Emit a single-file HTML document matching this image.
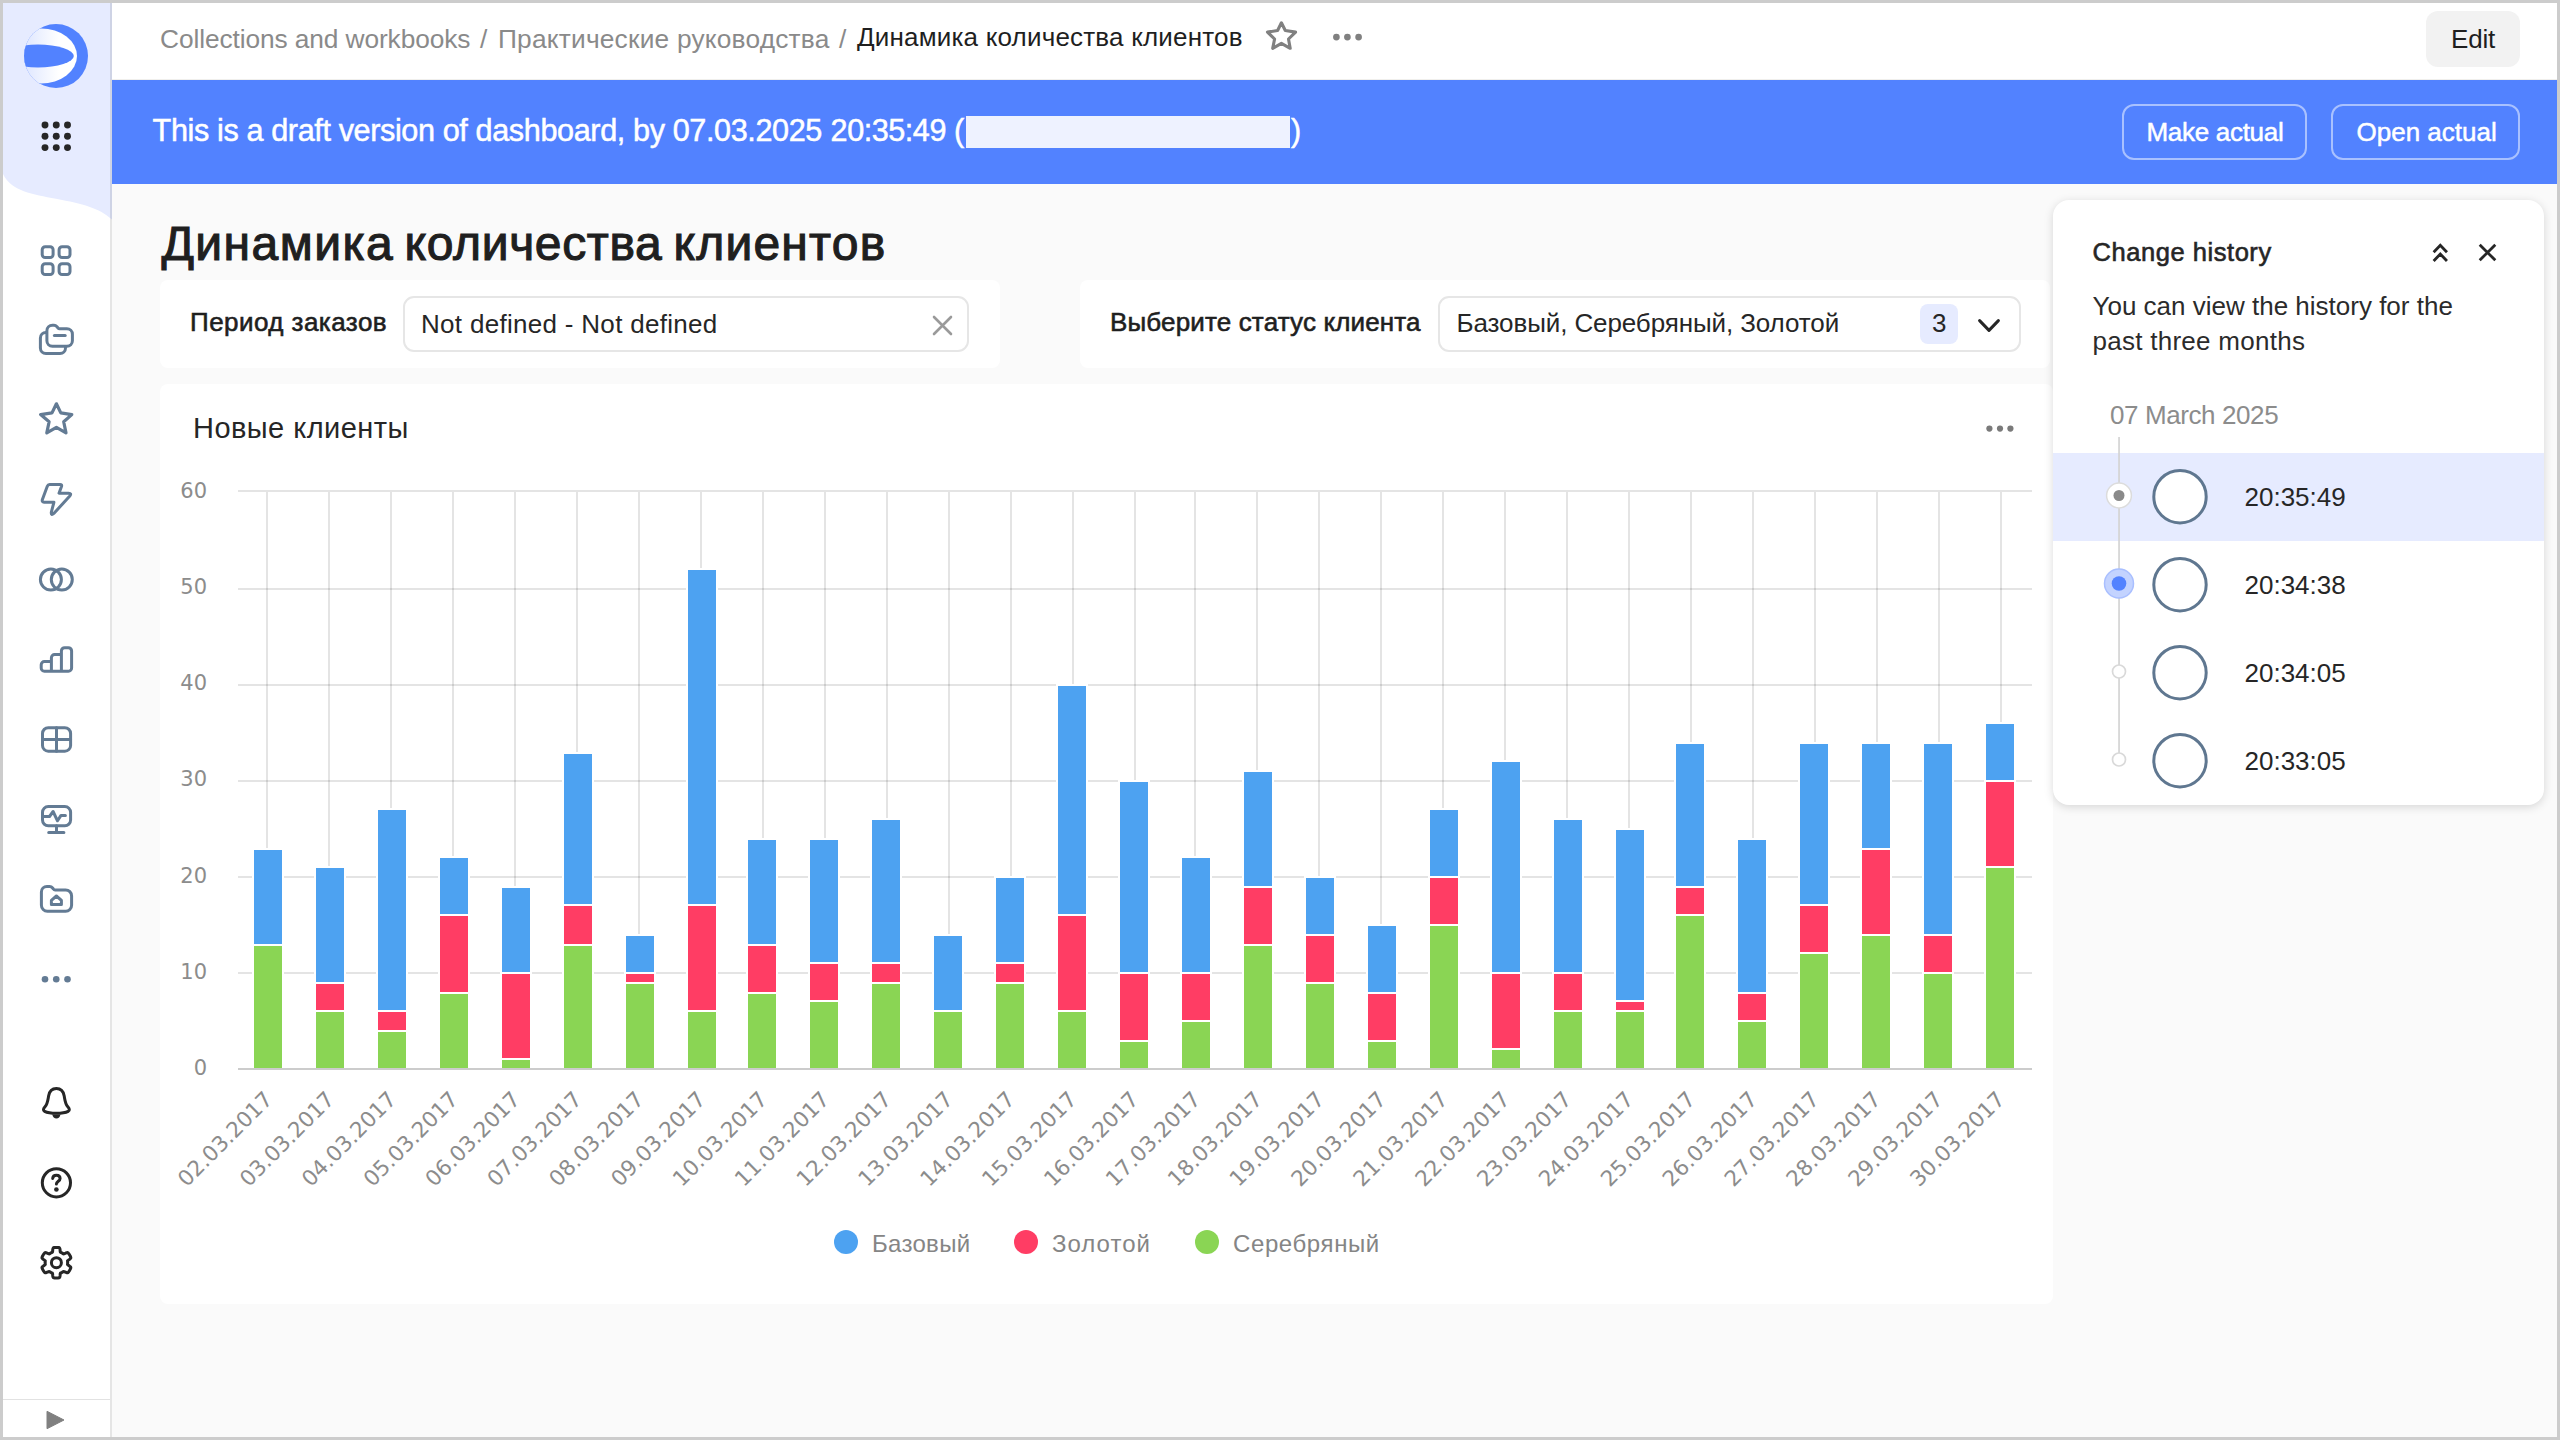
<!DOCTYPE html>
<html lang="ru"><head><meta charset="utf-8"><title>Динамика количества клиентов</title>
<style>
*{box-sizing:border-box;margin:0;padding:0}
html,body{width:2560px;height:1440px;overflow:hidden;background:#fafafa;font-family:"Liberation Sans", sans-serif;}
.abs{position:absolute}
.t{position:absolute;white-space:pre;line-height:1}
.yl{font-family:"DejaVu Sans", "Liberation Sans", sans-serif;font-size:21px;fill:#8c8c8c}
.xl{font-family:"DejaVu Sans", "Liberation Sans", sans-serif;font-size:21.5px;fill:#8c8c8c}
.lg{font-family:"Liberation Sans", sans-serif;font-size:24px;fill:#858585}
#frame{position:absolute;left:0;top:0;width:2560px;height:1440px;border:3px solid #cccccc;pointer-events:none;z-index:50}
#side{position:absolute;left:3px;top:3px;width:109px;height:1434px;background:#fff}
#head{position:absolute;left:112px;top:3px;width:2445px;height:77px;background:#fff}
#banner{position:absolute;left:112px;top:80px;width:2445px;height:104px;background:#5282ff}
.card{position:absolute;background:#fff;border-radius:8px}
.inp{position:absolute;border:2px solid #e6e6e6;border-radius:11px;background:#fff}
.btn{position:absolute;border-radius:12px}
#panel{position:absolute;left:2053px;top:200px;width:491px;height:605px;background:#fff;border-radius:16px;box-shadow:0 2px 10px rgba(0,0,0,0.15);overflow:hidden}
</style></head>
<body>
<div id="side"></div>
<svg class="abs" style="left:3px;top:3px" width="109" height="230" viewBox="0 0 109 230"><path d="M0 0 H109 V216.5 C 96 205, 80 201, 53 195.8 C 30 191.5, 8 188, 0 171 Z" fill="#e6ebff"/></svg>
<svg class="abs" style="left:23px;top:23px" width="66" height="66" viewBox="0 0 66 66">
<defs><linearGradient id="lg1" gradientUnits="userSpaceOnUse" x1="2" y1="0" x2="36" y2="0"><stop offset="0" stop-color="#dfe7ff"/><stop offset="1" stop-color="#ffffff"/></linearGradient>
<clipPath id="cp"><circle cx="33" cy="33" r="32"/></clipPath></defs>
<circle cx="33" cy="33" r="32" fill="#5282ff"/>
<g clip-path="url(#cp)">
<ellipse cx="18" cy="33" rx="36" ry="27.5" fill="url(#lg1)"/>
<ellipse cx="15" cy="33" rx="35.8" ry="11.4" fill="#5282ff"/>
</g></svg>
<svg class="abs" style="left:0;top:0" width="112" height="200" fill="#262626"><circle cx="45" cy="125" r="3.45"/><circle cx="56.25" cy="125" r="3.45"/><circle cx="67.5" cy="125" r="3.45"/><circle cx="45" cy="136.3" r="3.45"/><circle cx="56.25" cy="136.3" r="3.45"/><circle cx="67.5" cy="136.3" r="3.45"/><circle cx="45" cy="147.6" r="3.45"/><circle cx="56.25" cy="147.6" r="3.45"/><circle cx="67.5" cy="147.6" r="3.45"/></svg>
<svg class="abs" style="left:34px;top:239px" width="44" height="44" viewBox="34 239 44 44" fill="none" stroke="#637b94" stroke-width="3.0" stroke-linecap="round" stroke-linejoin="round"><rect x="42.2" y="246.7" width="10.9" height="10.9" rx="3"/><rect x="59.1" y="246.7" width="10.9" height="10.9" rx="3"/><rect x="42.2" y="263.7" width="10.9" height="10.9" rx="3"/><rect x="59.1" y="263.7" width="10.9" height="10.9" rx="3"/></svg>
<svg class="abs" style="left:34px;top:318px" width="44" height="44" viewBox="34 318 44 44" fill="none" stroke="#637b94" stroke-width="3.0" stroke-linecap="round" stroke-linejoin="round"><path d="M46.9 340.7 V330.8 A5.5 5.5 0 0 1 52.4 325.3 H54 C55.5 325.3 56.3 326 57 326.8 L58 328 C58.4 328.5 58.9 328.8 59.6 328.8 H66.9 A5.5 5.5 0 0 1 72.4 334.3 V340.7 A5.5 5.5 0 0 1 66.9 346.2 H52.4 A5.5 5.5 0 0 1 46.9 340.7 Z"/><path d="M46.5 332.5 H45.9 A5.5 5.5 0 0 0 40.4 338 V348 A5.5 5.5 0 0 0 45.9 353.5 H60 A5.5 5.5 0 0 0 65.5 348 V347"/><path d="M54.4 335.6 H65.2"/></svg>
<svg class="abs" style="left:34px;top:397px" width="44" height="44" viewBox="34 397 44 44" fill="none" stroke="#637b94" stroke-width="3.2" stroke-linecap="round" stroke-linejoin="round"><path d="M56.4 403.8 L60.8 412.9 L71.8 414.6 L63.7 421.7 L66 432.9 L56.4 427.3 L46.8 432.9 L49.1 421.7 L40.6 414.6 L52 412.9 Z"/></svg>
<svg class="abs" style="left:34px;top:477px" width="44" height="44" viewBox="34 477 44 44" fill="none" stroke="#637b94" stroke-width="3.0" stroke-linecap="round" stroke-linejoin="round"><path d="M49.6 484.4 H60 Q62.2 484.4 61.5 486.5 L59 493.2 H68.5 Q72 493.4 69.8 496 L53.8 513.5 Q51 516 51.3 512.3 L53.9 502.3 H44.2 Q41.6 502 42.4 499.5 L47.3 486.2 Q48 484.4 49.6 484.4 Z"/></svg>
<svg class="abs" style="left:34px;top:558px" width="44" height="44" viewBox="34 558 44 44" fill="none" stroke="#637b94" stroke-width="3.0" stroke-linecap="round" stroke-linejoin="round"><circle cx="50.9" cy="579.6" r="10.5"/><circle cx="61.8" cy="579.6" r="10.5"/></svg>
<svg class="abs" style="left:34px;top:638px" width="44" height="44" viewBox="34 638 44 44" fill="none" stroke="#637b94" stroke-width="3.0" stroke-linecap="round" stroke-linejoin="round"><path d="M41.2 668 V664.7 A3.2 3.2 0 0 1 44.4 661.5 H51.4 V657.8 A3.2 3.2 0 0 1 54.6 654.6 H61.4 V650.9 A3.2 3.2 0 0 1 64.6 647.7 H68.4 A3.2 3.2 0 0 1 71.6 650.9 V668 A3.2 3.2 0 0 1 68.4 671.25 H44.4 A3.2 3.2 0 0 1 41.2 668 Z M51.4 661.5 V671.25 M61.4 654.6 V671.25"/></svg>
<svg class="abs" style="left:34px;top:718px" width="44" height="44" viewBox="34 718 44 44" fill="none" stroke="#637b94" stroke-width="3.0" stroke-linecap="round" stroke-linejoin="round"><rect x="42.5" y="727.7" width="28.1" height="23.55" rx="5.8"/><path d="M56.5 727.7 V751.25 M42.5 739.5 H70.6"/></svg>
<svg class="abs" style="left:34px;top:798px" width="44" height="44" viewBox="34 798 44 44" fill="none" stroke="#637b94" stroke-width="3.0" stroke-linecap="round" stroke-linejoin="round"><rect x="42.5" y="806.5" width="28.1" height="19.3" rx="5.8"/><path d="M56.5 825.8 V832.5 M48.7 832.5 H63.9"/><path d="M42.5 816.5 H49.5 L53.1 811.5 L57.5 820.8 L61 815.4 H65.4"/></svg>
<svg class="abs" style="left:34px;top:878px" width="44" height="44" viewBox="34 878 44 44" fill="none" stroke="#637b94" stroke-width="3.0" stroke-linecap="round" stroke-linejoin="round"><path d="M41.4 892 A5.5 5.5 0 0 1 46.9 886.5 H49.6 C51 886.5 51.9 887.1 52.6 888 L53.4 889 C53.8 889.6 54.3 889.9 55.1 889.9 H65.6 A6 6 0 0 1 71.6 895.9 V905.25 A6 6 0 0 1 65.6 911.25 H47.4 A6 6 0 0 1 41.4 905.25 Z"/><path d="M56.4 896 L51.4 900.4 V904.6 H61.4 V900.4 Z"/></svg>
<svg class="abs" style="left:36px;top:969px" width="40" height="20" viewBox="36 969 40 20" fill="#637b94"><circle cx="45" cy="979.2" r="3.3"/><circle cx="56.25" cy="979.2" r="3.3"/><circle cx="67.5" cy="979.2" r="3.3"/></svg>
<svg class="abs" style="left:34px;top:1081px" width="44" height="44" viewBox="34 1081 44 44" fill="none" stroke="#262626" stroke-width="3.0" stroke-linecap="round" stroke-linejoin="round"><path d="M56.4 1088.6 C51.5 1088.6 49.3 1092 48.6 1096 C47.9 1100 47.5 1104 45 1106.8 C43.3 1108.7 42.8 1110.4 44.6 1111.3 C47 1112.5 52 1113.2 56.4 1113.2 C60.8 1113.2 65.8 1112.5 68.2 1111.3 C70 1110.4 69.5 1108.7 67.8 1106.8 C65.3 1104 64.9 1100 64.2 1096 C63.5 1092 61.3 1088.6 56.4 1088.6 Z"/><path d="M52.3 1114.6 H60.5 C60 1117 58.5 1118.6 56.4 1118.6 C54.3 1118.6 52.8 1117 52.3 1114.6 Z" fill="#262626" stroke="none"/></svg>
<svg class="abs" style="left:34px;top:1161px" width="44" height="44" viewBox="34 1161 44 44" fill="none" stroke="#262626" stroke-width="3.0" stroke-linecap="round" stroke-linejoin="round"><circle cx="56.4" cy="1182.8" r="14.1"/><path d="M52.7 1178.4 C52.9 1176.4 54.3 1175.3 56.4 1175.3 C58.6 1175.3 60.1 1176.6 60.1 1178.5 C60.1 1181.2 56.4 1181.4 56.4 1184.1"/><circle cx="56.4" cy="1189.5" r="2.3" fill="#262626" stroke="none"/></svg>
<svg class="abs" style="left:34px;top:1241px" width="44" height="44" viewBox="34 1241 44 44" fill="none" stroke="#262626" stroke-width="3.0" stroke-linecap="round" stroke-linejoin="round"><path d="M56.4 1247.4 L56.7 1247.4 L56.9 1247.4 L57.2 1247.4 L57.5 1247.4 L57.7 1247.5 L58.0 1247.5 L58.3 1247.5 L58.5 1247.5 L58.8 1247.6 L59.1 1247.6 L59.3 1247.7 L59.5 1247.9 L59.7 1248.3 L59.9 1248.8 L60.0 1249.3 L60.1 1249.9 L60.1 1250.6 L60.2 1251.1 L60.2 1251.6 L60.3 1252.0 L60.4 1252.2 L60.6 1252.3 L60.8 1252.3 L61.0 1252.4 L61.2 1252.5 L61.3 1252.6 L61.5 1252.7 L61.7 1252.8 L61.9 1252.9 L62.0 1253.0 L62.2 1253.1 L62.4 1253.2 L62.5 1253.3 L62.7 1253.4 L62.9 1253.5 L63.0 1253.6 L63.2 1253.7 L63.3 1253.8 L63.5 1253.9 L63.7 1253.9 L64.1 1253.8 L64.6 1253.6 L65.1 1253.4 L65.6 1253.2 L66.2 1252.9 L66.7 1252.7 L67.2 1252.6 L67.6 1252.6 L67.9 1252.7 L68.1 1252.9 L68.3 1253.1 L68.5 1253.3 L68.6 1253.5 L68.8 1253.7 L68.9 1253.9 L69.1 1254.1 L69.2 1254.4 L69.4 1254.6 L69.5 1254.8 L69.7 1255.0 L69.8 1255.3 L69.9 1255.5 L70.0 1255.8 L70.2 1256.0 L70.3 1256.2 L70.4 1256.5 L70.5 1256.7 L70.6 1257.0 L70.7 1257.2 L70.8 1257.5 L70.8 1257.7 L70.8 1258.0 L70.6 1258.4 L70.2 1258.7 L69.8 1259.1 L69.3 1259.5 L68.8 1259.8 L68.3 1260.2 L67.9 1260.5 L67.7 1260.7 L67.5 1260.9 L67.5 1261.1 L67.6 1261.3 L67.6 1261.5 L67.6 1261.7 L67.6 1261.9 L67.6 1262.1 L67.6 1262.3 L67.6 1262.5 L67.7 1262.7 L67.6 1262.9 L67.6 1263.1 L67.6 1263.3 L67.6 1263.5 L67.6 1263.7 L67.6 1263.9 L67.6 1264.1 L67.5 1264.3 L67.5 1264.5 L67.7 1264.7 L67.9 1264.9 L68.3 1265.2 L68.8 1265.6 L69.3 1265.9 L69.8 1266.3 L70.2 1266.7 L70.6 1267.0 L70.8 1267.4 L70.8 1267.7 L70.8 1267.9 L70.7 1268.2 L70.6 1268.4 L70.5 1268.7 L70.4 1268.9 L70.3 1269.2 L70.2 1269.4 L70.0 1269.6 L69.9 1269.9 L69.8 1270.1 L69.7 1270.4 L69.5 1270.6 L69.4 1270.8 L69.2 1271.0 L69.1 1271.3 L68.9 1271.5 L68.8 1271.7 L68.6 1271.9 L68.5 1272.1 L68.3 1272.3 L68.1 1272.5 L67.9 1272.7 L67.6 1272.8 L67.2 1272.8 L66.7 1272.7 L66.2 1272.5 L65.6 1272.2 L65.1 1272.0 L64.6 1271.8 L64.1 1271.6 L63.7 1271.5 L63.5 1271.5 L63.3 1271.6 L63.2 1271.7 L63.0 1271.8 L62.9 1271.9 L62.7 1272.0 L62.5 1272.1 L62.4 1272.2 L62.2 1272.3 L62.0 1272.4 L61.9 1272.5 L61.7 1272.6 L61.5 1272.7 L61.3 1272.8 L61.2 1272.9 L61.0 1273.0 L60.8 1273.1 L60.6 1273.1 L60.4 1273.2 L60.3 1273.4 L60.2 1273.8 L60.2 1274.3 L60.1 1274.8 L60.1 1275.5 L60.0 1276.1 L59.9 1276.6 L59.7 1277.1 L59.5 1277.5 L59.3 1277.7 L59.1 1277.8 L58.8 1277.8 L58.5 1277.9 L58.3 1277.9 L58.0 1277.9 L57.7 1277.9 L57.5 1278.0 L57.2 1278.0 L56.9 1278.0 L56.7 1278.0 L56.4 1278.0 L56.1 1278.0 L55.9 1278.0 L55.6 1278.0 L55.3 1278.0 L55.1 1277.9 L54.8 1277.9 L54.5 1277.9 L54.3 1277.9 L54.0 1277.8 L53.7 1277.8 L53.5 1277.7 L53.3 1277.5 L53.1 1277.1 L52.9 1276.6 L52.8 1276.1 L52.7 1275.5 L52.7 1274.8 L52.6 1274.3 L52.6 1273.8 L52.5 1273.4 L52.4 1273.2 L52.2 1273.1 L52.0 1273.1 L51.8 1273.0 L51.6 1272.9 L51.5 1272.8 L51.3 1272.7 L51.1 1272.6 L50.9 1272.5 L50.8 1272.4 L50.6 1272.3 L50.4 1272.2 L50.3 1272.1 L50.1 1272.0 L49.9 1271.9 L49.8 1271.8 L49.6 1271.7 L49.5 1271.6 L49.3 1271.5 L49.1 1271.5 L48.7 1271.6 L48.2 1271.8 L47.7 1272.0 L47.2 1272.2 L46.6 1272.5 L46.1 1272.7 L45.6 1272.8 L45.2 1272.8 L44.9 1272.7 L44.7 1272.5 L44.5 1272.3 L44.3 1272.1 L44.2 1271.9 L44.0 1271.7 L43.9 1271.5 L43.7 1271.3 L43.6 1271.0 L43.4 1270.8 L43.3 1270.6 L43.1 1270.4 L43.0 1270.1 L42.9 1269.9 L42.8 1269.6 L42.6 1269.4 L42.5 1269.2 L42.4 1268.9 L42.3 1268.7 L42.2 1268.4 L42.1 1268.2 L42.0 1267.9 L42.0 1267.7 L42.0 1267.4 L42.2 1267.0 L42.6 1266.7 L43.0 1266.3 L43.5 1265.9 L44.0 1265.6 L44.5 1265.2 L44.9 1264.9 L45.1 1264.7 L45.3 1264.5 L45.3 1264.3 L45.2 1264.1 L45.2 1263.9 L45.2 1263.7 L45.2 1263.5 L45.2 1263.3 L45.2 1263.1 L45.2 1262.9 L45.1 1262.7 L45.2 1262.5 L45.2 1262.3 L45.2 1262.1 L45.2 1261.9 L45.2 1261.7 L45.2 1261.5 L45.2 1261.3 L45.3 1261.1 L45.3 1260.9 L45.1 1260.7 L44.9 1260.5 L44.5 1260.2 L44.0 1259.8 L43.5 1259.5 L43.0 1259.1 L42.6 1258.7 L42.2 1258.4 L42.0 1258.0 L42.0 1257.7 L42.0 1257.5 L42.1 1257.2 L42.2 1257.0 L42.3 1256.7 L42.4 1256.5 L42.5 1256.2 L42.6 1256.0 L42.8 1255.8 L42.9 1255.5 L43.0 1255.3 L43.1 1255.0 L43.3 1254.8 L43.4 1254.6 L43.6 1254.4 L43.7 1254.1 L43.9 1253.9 L44.0 1253.7 L44.2 1253.5 L44.3 1253.3 L44.5 1253.1 L44.7 1252.9 L44.9 1252.7 L45.2 1252.6 L45.6 1252.6 L46.1 1252.7 L46.6 1252.9 L47.2 1253.2 L47.7 1253.4 L48.2 1253.6 L48.7 1253.8 L49.1 1253.9 L49.3 1253.9 L49.5 1253.8 L49.6 1253.7 L49.8 1253.6 L49.9 1253.5 L50.1 1253.4 L50.3 1253.3 L50.4 1253.2 L50.6 1253.1 L50.8 1253.0 L50.9 1252.9 L51.1 1252.8 L51.3 1252.7 L51.5 1252.6 L51.6 1252.5 L51.8 1252.4 L52.0 1252.3 L52.2 1252.3 L52.4 1252.2 L52.5 1252.0 L52.6 1251.6 L52.6 1251.1 L52.7 1250.6 L52.7 1249.9 L52.8 1249.3 L52.9 1248.8 L53.1 1248.3 L53.3 1247.9 L53.5 1247.7 L53.7 1247.6 L54.0 1247.6 L54.3 1247.5 L54.5 1247.5 L54.8 1247.5 L55.1 1247.5 L55.3 1247.4 L55.6 1247.4 L55.9 1247.4 L56.1 1247.4 Z"/><circle cx="56.4" cy="1262.7" r="5"/></svg>
<div class="abs" style="left:110.4px;top:3px;width:1.6px;height:1434px;background:rgba(0,0,0,0.1)"></div>
<div class="abs" style="left:3px;top:1398.5px;width:107px;height:1.5px;background:#e2e2e2"></div>
<svg class="abs" style="left:46px;top:1409.5px" width="20" height="20" viewBox="0 0 20 20"><path d="M1 1.3 L18 10 L1 18.7 Z" fill="#808080" stroke="#808080" stroke-width="1" stroke-linejoin="round"/></svg>
<div id="head"></div>
<div class="abs" style="left:112px;top:78.6px;width:2445px;height:1.4px;background:#f0efec"></div>
<div class="t" style="left:160px;top:26.14px;font-size:26.3px;color:#8a8a8a;letter-spacing:-0.1px;">Collections and workbooks</div>
<div class="t" style="left:480px;top:26.14px;font-size:26.3px;color:#8a8a8a;">/</div>
<div class="t" style="left:498px;top:26.14px;font-size:26.3px;color:#8a8a8a;letter-spacing:0.2px;">Практические руководства</div>
<div class="t" style="left:839px;top:26.14px;font-size:26.3px;color:#8a8a8a;">/</div>
<div class="t" style="left:857px;top:24.49px;font-size:26px;color:#1f1f1f;letter-spacing:0.19px;">Динамика количества клиентов</div>
<svg class="abs" style="left:1260px;top:14px" width="44" height="44" viewBox="1260 14 44 44" fill="none" stroke="#808080" stroke-width="3.1" stroke-linejoin="round"><path d="M1281.4 22.8 L1285.3 30.5 L1295.6 32.1 L1288.5 39 L1290.2 48.3 L1281.4 43.4 L1272.7 48.3 L1274.6 39 L1267.5 32.1 L1277.6 30.5 Z"/></svg>
<svg class="abs" style="left:1328px;top:29px" width="40" height="16" viewBox="1328 29 40 16" fill="#808080"><circle cx="1336.4" cy="37.1" r="3.35"/><circle cx="1347.4" cy="37.1" r="3.35"/><circle cx="1358.6" cy="37.1" r="3.35"/></svg>
<div class="btn" style="left:2426px;top:11px;width:94px;height:56px;background:#f2f2f2"></div>
<div class="t" style="left:2451px;top:25.99px;font-size:26px;color:#1f1f1f;letter-spacing:-0.2px;">Edit</div>
<div id="banner"></div>
<div class="t" style="left:152.6px;top:115.10px;font-size:30.6px;color:#fff;letter-spacing:-0.38px;-webkit-text-stroke:0.5px #fff;">This is a draft version of dashboard, by 07.03.2025</div>
<div class="t" style="left:830.6px;top:115.10px;font-size:30.6px;color:#fff;letter-spacing:-0.47px;-webkit-text-stroke:0.5px #fff;">20:35:49 (</div>
<div class="abs" style="left:966px;top:116px;width:324px;height:32px;background:#eef2ff"></div>
<div class="t" style="left:1291px;top:115.10px;font-size:30.6px;color:#fff;-webkit-text-stroke:0.5px #fff;">)</div>
<div class="btn" style="left:2122px;top:104px;width:185px;height:56px;border:2px solid rgba(255,255,255,0.5)"></div>
<div class="t" style="left:2146.5px;top:118.59px;font-size:26px;color:#fff;letter-spacing:-0.3px;-webkit-text-stroke:0.5px #fff;">Make actual</div>
<div class="btn" style="left:2331px;top:104px;width:189px;height:56px;border:2px solid rgba(255,255,255,0.5)"></div>
<div class="t" style="left:2356.5px;top:118.59px;font-size:26px;color:#fff;-webkit-text-stroke:0.5px #fff;">Open actual</div>
<div class="t" style="left:161.4px;top:220.37px;font-size:48px;color:#1f1f1f;letter-spacing:1.45px;-webkit-text-stroke:1.1px #1f1f1f;">Динамика</div>
<div class="t" style="left:404.6px;top:220.37px;font-size:48px;color:#1f1f1f;letter-spacing:0.65px;-webkit-text-stroke:1.1px #1f1f1f;">количества</div>
<div class="t" style="left:673.4px;top:220.37px;font-size:48px;color:#1f1f1f;letter-spacing:1.22px;-webkit-text-stroke:1.1px #1f1f1f;">клиентов</div>
<div class="card" style="left:160px;top:280px;width:840px;height:88px"></div>
<div class="t" style="left:190px;top:308.99px;font-size:26px;color:#1f1f1f;letter-spacing:0.45px;-webkit-text-stroke:0.6px #1f1f1f;">Период заказов</div>
<div class="inp" style="left:403px;top:296px;width:566px;height:56px"></div>
<div class="t" style="left:421px;top:310.99px;font-size:26px;color:#262626;letter-spacing:0.3px;">Not defined - Not defined</div>
<svg class="abs" style="left:931px;top:314px" width="24" height="24" fill="none" stroke="#9a9a9a" stroke-width="2.6" stroke-linecap="round"><path d="M3 3 L20 20 M20 3 L3 20"/></svg>
<div class="card" style="left:1080px;top:280px;width:970px;height:88px"></div>
<div class="t" style="left:1110px;top:308.99px;font-size:26px;color:#1f1f1f;letter-spacing:0.15px;-webkit-text-stroke:0.6px #1f1f1f;">Выберите статус клиента</div>
<div class="inp" style="left:1438px;top:296px;width:583px;height:56px"></div>
<div class="t" style="left:1456.5px;top:309.99px;font-size:26px;color:#262626;letter-spacing:-0.1px;">Базовый, Серебряный, Золотой</div>
<div class="abs" style="left:1920px;top:304px;width:38px;height:40px;border-radius:8px;background:#e6ebff"></div>
<div class="t" style="left:1932px;top:310.19px;font-size:26px;color:#262626;">3</div>
<svg class="abs" style="left:1975px;top:314px" width="28" height="24" fill="none" stroke="#262626" stroke-width="3" stroke-linecap="round" stroke-linejoin="round"><path d="M4.6 6.6 L14 16.4 L23.4 6.6"/></svg>
<div class="card" style="left:160px;top:384px;width:1893px;height:920px"></div>
<div class="t" style="left:193px;top:413.65px;font-size:29px;color:#262626;letter-spacing:0.45px;">Новые клиенты</div>
<svg class="abs" style="left:1980px;top:420px" width="40" height="16" fill="#7a7a7a"><circle cx="9.4" cy="8.6" r="3.1"/><circle cx="20" cy="8.6" r="3.1"/><circle cx="30.4" cy="8.6" r="3.1"/></svg>
<svg class="abs" style="left:0;top:0" width="2560" height="1440" viewBox="0 0 2560 1440">
<rect x="266" y="492" width="2" height="576" fill="rgba(0,0,0,0.105)"/>
<rect x="328" y="492" width="2" height="576" fill="rgba(0,0,0,0.105)"/>
<rect x="390" y="492" width="2" height="576" fill="rgba(0,0,0,0.105)"/>
<rect x="452" y="492" width="2" height="576" fill="rgba(0,0,0,0.105)"/>
<rect x="514" y="492" width="2" height="576" fill="rgba(0,0,0,0.105)"/>
<rect x="576" y="492" width="2" height="576" fill="rgba(0,0,0,0.105)"/>
<rect x="638" y="492" width="2" height="576" fill="rgba(0,0,0,0.105)"/>
<rect x="700" y="492" width="2" height="576" fill="rgba(0,0,0,0.105)"/>
<rect x="762" y="492" width="2" height="576" fill="rgba(0,0,0,0.105)"/>
<rect x="824" y="492" width="2" height="576" fill="rgba(0,0,0,0.105)"/>
<rect x="886" y="492" width="2" height="576" fill="rgba(0,0,0,0.105)"/>
<rect x="948" y="492" width="2" height="576" fill="rgba(0,0,0,0.105)"/>
<rect x="1010" y="492" width="2" height="576" fill="rgba(0,0,0,0.105)"/>
<rect x="1072" y="492" width="2" height="576" fill="rgba(0,0,0,0.105)"/>
<rect x="1134" y="492" width="2" height="576" fill="rgba(0,0,0,0.105)"/>
<rect x="1194" y="492" width="2" height="576" fill="rgba(0,0,0,0.105)"/>
<rect x="1256" y="492" width="2" height="576" fill="rgba(0,0,0,0.105)"/>
<rect x="1318" y="492" width="2" height="576" fill="rgba(0,0,0,0.105)"/>
<rect x="1380" y="492" width="2" height="576" fill="rgba(0,0,0,0.105)"/>
<rect x="1442" y="492" width="2" height="576" fill="rgba(0,0,0,0.105)"/>
<rect x="1504" y="492" width="2" height="576" fill="rgba(0,0,0,0.105)"/>
<rect x="1566" y="492" width="2" height="576" fill="rgba(0,0,0,0.105)"/>
<rect x="1628" y="492" width="2" height="576" fill="rgba(0,0,0,0.105)"/>
<rect x="1690" y="492" width="2" height="576" fill="rgba(0,0,0,0.105)"/>
<rect x="1752" y="492" width="2" height="576" fill="rgba(0,0,0,0.105)"/>
<rect x="1814" y="492" width="2" height="576" fill="rgba(0,0,0,0.105)"/>
<rect x="1876" y="492" width="2" height="576" fill="rgba(0,0,0,0.105)"/>
<rect x="1938" y="492" width="2" height="576" fill="rgba(0,0,0,0.105)"/>
<rect x="2000" y="492" width="2" height="576" fill="rgba(0,0,0,0.105)"/>
<rect x="238.0" y="972" width="1794.0" height="2" fill="rgba(0,0,0,0.105)"/>
<rect x="238.0" y="876" width="1794.0" height="2" fill="rgba(0,0,0,0.105)"/>
<rect x="238.0" y="780" width="1794.0" height="2" fill="rgba(0,0,0,0.105)"/>
<rect x="238.0" y="684" width="1794.0" height="2" fill="rgba(0,0,0,0.105)"/>
<rect x="238.0" y="588" width="1794.0" height="2" fill="rgba(0,0,0,0.105)"/>
<rect x="238.0" y="490" width="1794.0" height="2" fill="rgba(0,0,0,0.105)"/>
<rect x="253" y="945" width="30" height="124" fill="#8ad554" stroke="#fff" stroke-width="2"/>
<rect x="253" y="849" width="30" height="96" fill="#4da2f1" stroke="#fff" stroke-width="2"/>
<rect x="315" y="1011" width="30" height="58" fill="#8ad554" stroke="#fff" stroke-width="2"/>
<rect x="315" y="983" width="30" height="28" fill="#ff3d64" stroke="#fff" stroke-width="2"/>
<rect x="315" y="867" width="30" height="116" fill="#4da2f1" stroke="#fff" stroke-width="2"/>
<rect x="377" y="1031" width="30" height="38" fill="#8ad554" stroke="#fff" stroke-width="2"/>
<rect x="377" y="1011" width="30" height="20" fill="#ff3d64" stroke="#fff" stroke-width="2"/>
<rect x="377" y="809" width="30" height="202" fill="#4da2f1" stroke="#fff" stroke-width="2"/>
<rect x="439" y="993" width="30" height="76" fill="#8ad554" stroke="#fff" stroke-width="2"/>
<rect x="439" y="915" width="30" height="78" fill="#ff3d64" stroke="#fff" stroke-width="2"/>
<rect x="439" y="857" width="30" height="58" fill="#4da2f1" stroke="#fff" stroke-width="2"/>
<rect x="501" y="1059" width="30" height="10" fill="#8ad554" stroke="#fff" stroke-width="2"/>
<rect x="501" y="973" width="30" height="86" fill="#ff3d64" stroke="#fff" stroke-width="2"/>
<rect x="501" y="887" width="30" height="86" fill="#4da2f1" stroke="#fff" stroke-width="2"/>
<rect x="563" y="945" width="30" height="124" fill="#8ad554" stroke="#fff" stroke-width="2"/>
<rect x="563" y="905" width="30" height="40" fill="#ff3d64" stroke="#fff" stroke-width="2"/>
<rect x="563" y="753" width="30" height="152" fill="#4da2f1" stroke="#fff" stroke-width="2"/>
<rect x="625" y="983" width="30" height="86" fill="#8ad554" stroke="#fff" stroke-width="2"/>
<rect x="625" y="973" width="30" height="10" fill="#ff3d64" stroke="#fff" stroke-width="2"/>
<rect x="625" y="935" width="30" height="38" fill="#4da2f1" stroke="#fff" stroke-width="2"/>
<rect x="687" y="1011" width="30" height="58" fill="#8ad554" stroke="#fff" stroke-width="2"/>
<rect x="687" y="905" width="30" height="106" fill="#ff3d64" stroke="#fff" stroke-width="2"/>
<rect x="687" y="569" width="30" height="336" fill="#4da2f1" stroke="#fff" stroke-width="2"/>
<rect x="747" y="993" width="30" height="76" fill="#8ad554" stroke="#fff" stroke-width="2"/>
<rect x="747" y="945" width="30" height="48" fill="#ff3d64" stroke="#fff" stroke-width="2"/>
<rect x="747" y="839" width="30" height="106" fill="#4da2f1" stroke="#fff" stroke-width="2"/>
<rect x="809" y="1001" width="30" height="68" fill="#8ad554" stroke="#fff" stroke-width="2"/>
<rect x="809" y="963" width="30" height="38" fill="#ff3d64" stroke="#fff" stroke-width="2"/>
<rect x="809" y="839" width="30" height="124" fill="#4da2f1" stroke="#fff" stroke-width="2"/>
<rect x="871" y="983" width="30" height="86" fill="#8ad554" stroke="#fff" stroke-width="2"/>
<rect x="871" y="963" width="30" height="20" fill="#ff3d64" stroke="#fff" stroke-width="2"/>
<rect x="871" y="819" width="30" height="144" fill="#4da2f1" stroke="#fff" stroke-width="2"/>
<rect x="933" y="1011" width="30" height="58" fill="#8ad554" stroke="#fff" stroke-width="2"/>
<rect x="933" y="935" width="30" height="76" fill="#4da2f1" stroke="#fff" stroke-width="2"/>
<rect x="995" y="983" width="30" height="86" fill="#8ad554" stroke="#fff" stroke-width="2"/>
<rect x="995" y="963" width="30" height="20" fill="#ff3d64" stroke="#fff" stroke-width="2"/>
<rect x="995" y="877" width="30" height="86" fill="#4da2f1" stroke="#fff" stroke-width="2"/>
<rect x="1057" y="1011" width="30" height="58" fill="#8ad554" stroke="#fff" stroke-width="2"/>
<rect x="1057" y="915" width="30" height="96" fill="#ff3d64" stroke="#fff" stroke-width="2"/>
<rect x="1057" y="685" width="30" height="230" fill="#4da2f1" stroke="#fff" stroke-width="2"/>
<rect x="1119" y="1041" width="30" height="28" fill="#8ad554" stroke="#fff" stroke-width="2"/>
<rect x="1119" y="973" width="30" height="68" fill="#ff3d64" stroke="#fff" stroke-width="2"/>
<rect x="1119" y="781" width="30" height="192" fill="#4da2f1" stroke="#fff" stroke-width="2"/>
<rect x="1181" y="1021" width="30" height="48" fill="#8ad554" stroke="#fff" stroke-width="2"/>
<rect x="1181" y="973" width="30" height="48" fill="#ff3d64" stroke="#fff" stroke-width="2"/>
<rect x="1181" y="857" width="30" height="116" fill="#4da2f1" stroke="#fff" stroke-width="2"/>
<rect x="1243" y="945" width="30" height="124" fill="#8ad554" stroke="#fff" stroke-width="2"/>
<rect x="1243" y="887" width="30" height="58" fill="#ff3d64" stroke="#fff" stroke-width="2"/>
<rect x="1243" y="771" width="30" height="116" fill="#4da2f1" stroke="#fff" stroke-width="2"/>
<rect x="1305" y="983" width="30" height="86" fill="#8ad554" stroke="#fff" stroke-width="2"/>
<rect x="1305" y="935" width="30" height="48" fill="#ff3d64" stroke="#fff" stroke-width="2"/>
<rect x="1305" y="877" width="30" height="58" fill="#4da2f1" stroke="#fff" stroke-width="2"/>
<rect x="1367" y="1041" width="30" height="28" fill="#8ad554" stroke="#fff" stroke-width="2"/>
<rect x="1367" y="993" width="30" height="48" fill="#ff3d64" stroke="#fff" stroke-width="2"/>
<rect x="1367" y="925" width="30" height="68" fill="#4da2f1" stroke="#fff" stroke-width="2"/>
<rect x="1429" y="925" width="30" height="144" fill="#8ad554" stroke="#fff" stroke-width="2"/>
<rect x="1429" y="877" width="30" height="48" fill="#ff3d64" stroke="#fff" stroke-width="2"/>
<rect x="1429" y="809" width="30" height="68" fill="#4da2f1" stroke="#fff" stroke-width="2"/>
<rect x="1491" y="1049" width="30" height="20" fill="#8ad554" stroke="#fff" stroke-width="2"/>
<rect x="1491" y="973" width="30" height="76" fill="#ff3d64" stroke="#fff" stroke-width="2"/>
<rect x="1491" y="761" width="30" height="212" fill="#4da2f1" stroke="#fff" stroke-width="2"/>
<rect x="1553" y="1011" width="30" height="58" fill="#8ad554" stroke="#fff" stroke-width="2"/>
<rect x="1553" y="973" width="30" height="38" fill="#ff3d64" stroke="#fff" stroke-width="2"/>
<rect x="1553" y="819" width="30" height="154" fill="#4da2f1" stroke="#fff" stroke-width="2"/>
<rect x="1615" y="1011" width="30" height="58" fill="#8ad554" stroke="#fff" stroke-width="2"/>
<rect x="1615" y="1001" width="30" height="10" fill="#ff3d64" stroke="#fff" stroke-width="2"/>
<rect x="1615" y="829" width="30" height="172" fill="#4da2f1" stroke="#fff" stroke-width="2"/>
<rect x="1675" y="915" width="30" height="154" fill="#8ad554" stroke="#fff" stroke-width="2"/>
<rect x="1675" y="887" width="30" height="28" fill="#ff3d64" stroke="#fff" stroke-width="2"/>
<rect x="1675" y="743" width="30" height="144" fill="#4da2f1" stroke="#fff" stroke-width="2"/>
<rect x="1737" y="1021" width="30" height="48" fill="#8ad554" stroke="#fff" stroke-width="2"/>
<rect x="1737" y="993" width="30" height="28" fill="#ff3d64" stroke="#fff" stroke-width="2"/>
<rect x="1737" y="839" width="30" height="154" fill="#4da2f1" stroke="#fff" stroke-width="2"/>
<rect x="1799" y="953" width="30" height="116" fill="#8ad554" stroke="#fff" stroke-width="2"/>
<rect x="1799" y="905" width="30" height="48" fill="#ff3d64" stroke="#fff" stroke-width="2"/>
<rect x="1799" y="743" width="30" height="162" fill="#4da2f1" stroke="#fff" stroke-width="2"/>
<rect x="1861" y="935" width="30" height="134" fill="#8ad554" stroke="#fff" stroke-width="2"/>
<rect x="1861" y="849" width="30" height="86" fill="#ff3d64" stroke="#fff" stroke-width="2"/>
<rect x="1861" y="743" width="30" height="106" fill="#4da2f1" stroke="#fff" stroke-width="2"/>
<rect x="1923" y="973" width="30" height="96" fill="#8ad554" stroke="#fff" stroke-width="2"/>
<rect x="1923" y="935" width="30" height="38" fill="#ff3d64" stroke="#fff" stroke-width="2"/>
<rect x="1923" y="743" width="30" height="192" fill="#4da2f1" stroke="#fff" stroke-width="2"/>
<rect x="1985" y="867" width="30" height="202" fill="#8ad554" stroke="#fff" stroke-width="2"/>
<rect x="1985" y="781" width="30" height="86" fill="#ff3d64" stroke="#fff" stroke-width="2"/>
<rect x="1985" y="723" width="30" height="58" fill="#4da2f1" stroke="#fff" stroke-width="2"/>
<rect x="238.0" y="1068.0" width="1794.0" height="2" fill="#cccccc"/>
<text x="207" y="1075.1" text-anchor="end" class="yl">0</text>
<text x="207" y="978.9" text-anchor="end" class="yl">10</text>
<text x="207" y="882.6" text-anchor="end" class="yl">20</text>
<text x="207" y="786.4" text-anchor="end" class="yl">30</text>
<text x="207" y="690.1" text-anchor="end" class="yl">40</text>
<text x="207" y="593.9" text-anchor="end" class="yl">50</text>
<text x="207" y="497.6" text-anchor="end" class="yl">60</text>
<text transform="translate(273.9,1100.6) rotate(-45)" text-anchor="end" class="xl">02.03.2017</text>
<text transform="translate(335.8,1100.6) rotate(-45)" text-anchor="end" class="xl">03.03.2017</text>
<text transform="translate(397.7,1100.6) rotate(-45)" text-anchor="end" class="xl">04.03.2017</text>
<text transform="translate(459.5,1100.6) rotate(-45)" text-anchor="end" class="xl">05.03.2017</text>
<text transform="translate(521.4,1100.6) rotate(-45)" text-anchor="end" class="xl">06.03.2017</text>
<text transform="translate(583.2,1100.6) rotate(-45)" text-anchor="end" class="xl">07.03.2017</text>
<text transform="translate(645.1,1100.6) rotate(-45)" text-anchor="end" class="xl">08.03.2017</text>
<text transform="translate(707.0,1100.6) rotate(-45)" text-anchor="end" class="xl">09.03.2017</text>
<text transform="translate(768.8,1100.6) rotate(-45)" text-anchor="end" class="xl">10.03.2017</text>
<text transform="translate(830.7,1100.6) rotate(-45)" text-anchor="end" class="xl">11.03.2017</text>
<text transform="translate(892.6,1100.6) rotate(-45)" text-anchor="end" class="xl">12.03.2017</text>
<text transform="translate(954.4,1100.6) rotate(-45)" text-anchor="end" class="xl">13.03.2017</text>
<text transform="translate(1016.3,1100.6) rotate(-45)" text-anchor="end" class="xl">14.03.2017</text>
<text transform="translate(1078.1,1100.6) rotate(-45)" text-anchor="end" class="xl">15.03.2017</text>
<text transform="translate(1140.0,1100.6) rotate(-45)" text-anchor="end" class="xl">16.03.2017</text>
<text transform="translate(1201.9,1100.6) rotate(-45)" text-anchor="end" class="xl">17.03.2017</text>
<text transform="translate(1263.7,1100.6) rotate(-45)" text-anchor="end" class="xl">18.03.2017</text>
<text transform="translate(1325.6,1100.6) rotate(-45)" text-anchor="end" class="xl">19.03.2017</text>
<text transform="translate(1387.4,1100.6) rotate(-45)" text-anchor="end" class="xl">20.03.2017</text>
<text transform="translate(1449.3,1100.6) rotate(-45)" text-anchor="end" class="xl">21.03.2017</text>
<text transform="translate(1511.2,1100.6) rotate(-45)" text-anchor="end" class="xl">22.03.2017</text>
<text transform="translate(1573.0,1100.6) rotate(-45)" text-anchor="end" class="xl">23.03.2017</text>
<text transform="translate(1634.9,1100.6) rotate(-45)" text-anchor="end" class="xl">24.03.2017</text>
<text transform="translate(1696.8,1100.6) rotate(-45)" text-anchor="end" class="xl">25.03.2017</text>
<text transform="translate(1758.6,1100.6) rotate(-45)" text-anchor="end" class="xl">26.03.2017</text>
<text transform="translate(1820.5,1100.6) rotate(-45)" text-anchor="end" class="xl">27.03.2017</text>
<text transform="translate(1882.3,1100.6) rotate(-45)" text-anchor="end" class="xl">28.03.2017</text>
<text transform="translate(1944.2,1100.6) rotate(-45)" text-anchor="end" class="xl">29.03.2017</text>
<text transform="translate(2006.1,1100.6) rotate(-45)" text-anchor="end" class="xl">30.03.2017</text>
<circle cx="846" cy="1242" r="12" fill="#4da2f1"/>
<text x="872" y="1251.5" class="lg" style="letter-spacing:0.3px">Базовый</text>
<circle cx="1026" cy="1242" r="12" fill="#ff3d64"/>
<text x="1052" y="1251.5" class="lg" style="letter-spacing:1px">Золотой</text>
<circle cx="1207" cy="1242" r="12" fill="#8ad554"/>
<text x="1233" y="1251.5" class="lg" style="letter-spacing:0.6px">Серебряный</text>
</svg>
<div id="panel"><div class="abs" style="left:0;top:253px;width:491px;height:88px;background:#e6ebff"></div></div>
<div class="t" style="left:2092.5px;top:239.61px;font-size:25.5px;color:#262626;letter-spacing:0.55px;-webkit-text-stroke:0.6px #262626;">Change history</div>
<div class="t" style="left:2092.5px;top:292.69px;font-size:26px;color:#2b2b2b;">You can view the history for the</div>
<div class="t" style="left:2092.5px;top:327.69px;font-size:26px;color:#2b2b2b;letter-spacing:0.27px;">past three months</div>
<div class="t" style="left:2110px;top:401.79px;font-size:26px;color:#8c8c8c;letter-spacing:-0.4px;">07 March 2025</div>
<svg class="abs" style="left:2426px;top:238px" width="30" height="30" viewBox="2426 238 30 30" fill="none" stroke="#262626" stroke-width="2.8" stroke-linecap="square" stroke-linejoin="miter"><path d="M2434.6 251.2 L2440.3 245.2 L2446 251.2 M2434.6 260 L2440.3 254 L2446 260"/></svg>
<svg class="abs" style="left:2474px;top:238px" width="28" height="28" viewBox="2474 238 28 28" fill="none" stroke="#262626" stroke-width="2.8" stroke-linecap="square"><path d="M2480.7 245.7 L2494.3 259.3 M2494.3 245.7 L2480.7 259.3"/></svg>
<svg class="abs" style="left:2053px;top:200px" width="491" height="604" viewBox="2053 200 491 604"><rect x="2118.2" y="437" width="1.7" height="322" fill="#d4d4d4"/><circle cx="2119" cy="495.5" r="12.4" fill="#fff" stroke="#dcdcdc" stroke-width="1.5"/><circle cx="2119" cy="495.5" r="5.5" fill="#8a8a8a"/><circle cx="2119" cy="583.5" r="14.5" fill="#c3d3ff" stroke="#a9bfff" stroke-width="1.5"/><circle cx="2119" cy="583.5" r="7.3" fill="#5282ff"/><circle cx="2119" cy="671.5" r="6.5" fill="#fff" stroke="#d9d9d9" stroke-width="1.7"/><circle cx="2119" cy="759.5" r="6.5" fill="#fff" stroke="#d9d9d9" stroke-width="1.7"/><circle cx="2180" cy="496.7" r="26.2" fill="#fff" stroke="#5f7790" stroke-width="3"/><circle cx="2180" cy="584.7" r="26.2" fill="#fff" stroke="#5f7790" stroke-width="3"/><circle cx="2180" cy="672.7" r="26.2" fill="#fff" stroke="#5f7790" stroke-width="3"/><circle cx="2180" cy="760.7" r="26.2" fill="#fff" stroke="#5f7790" stroke-width="3"/></svg>
<div class="t" style="left:2244.5px;top:483.69px;font-size:26px;color:#262626;">20:35:49</div>
<div class="t" style="left:2244.5px;top:571.69px;font-size:26px;color:#262626;">20:34:38</div>
<div class="t" style="left:2244.5px;top:659.69px;font-size:26px;color:#262626;">20:34:05</div>
<div class="t" style="left:2244.5px;top:747.69px;font-size:26px;color:#262626;">20:33:05</div>
<div id="frame"></div>
</body></html>
